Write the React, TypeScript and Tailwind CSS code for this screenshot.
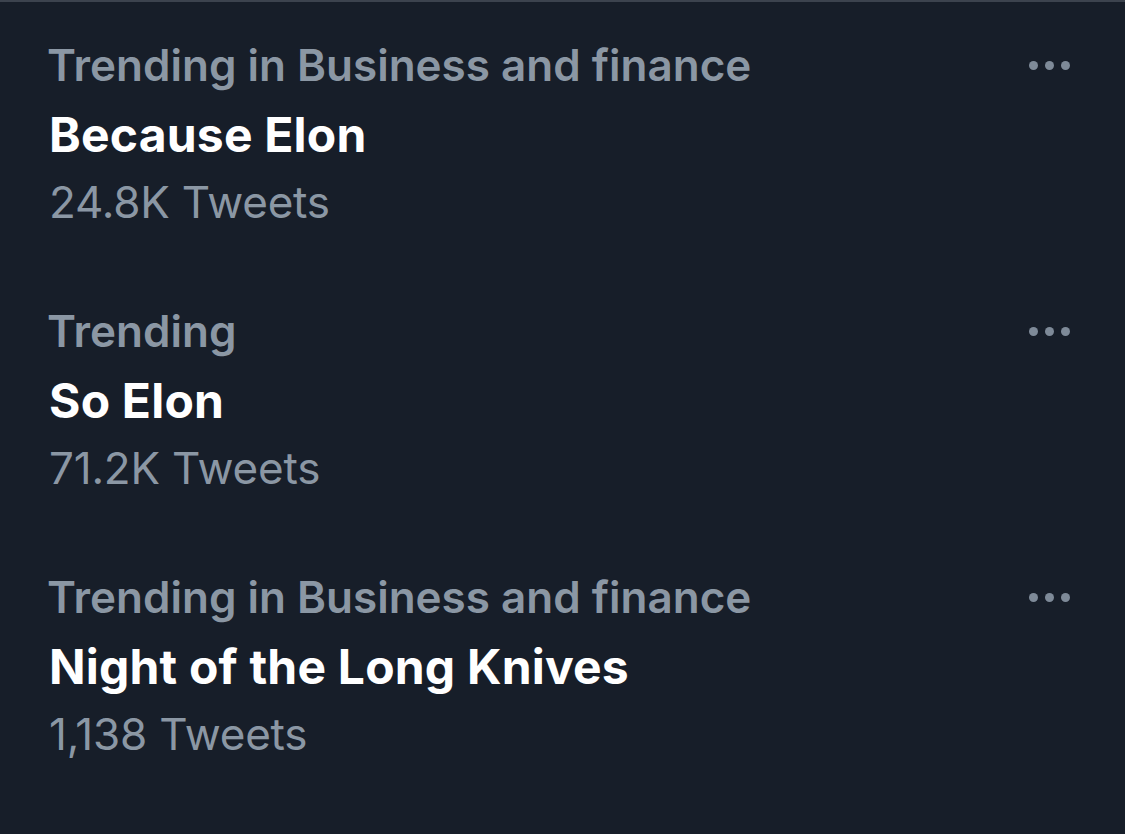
// Trend rows shown in the explore list
interface Trend {
  category: string
  title: string
  count: string
}

const trends: Trend[] = [
  { category: "Trending in Business and finance", title: "Because Elon", count: "24.8K Tweets" },
  { category: "Trending", title: "So Elon", count: "71.2K Tweets" },
  { category: "Trending in Business and finance", title: "Night of the Long Knives", count: "1,138 Tweets" },
]

function MoreDots() {
  return (
    <div className="flex items-center gap-[7px]">
      <span className="block w-[9px] h-[9px] rounded-full bg-[#7e8a98]" />
      <span className="block w-[9px] h-[9px] rounded-full bg-[#7e8a98]" />
      <span className="block w-[9px] h-[9px] rounded-full bg-[#7e8a98]" />
    </div>
  )
}

function TrendRow({ trend }: { trend: Trend }) {
  return (
    <div className="pt-[30px] pb-[32px] pl-[49px] pr-[55px]">
      <div className="flex items-center justify-between h-[70px]">
        <span className="-ml-[2px] text-[44px] leading-[70px] font-semibold text-[#8b97a4]">
          {trend.category}
        </span>
        <MoreDots />
      </div>
      <div className="text-[48px] leading-[70px] font-bold text-white tracking-[0.2px]">{trend.title}</div>
      <div className="text-[44px] leading-[64px] font-normal text-[#8b97a4] tracking-[-0.2px]">{trend.count}</div>
    </div>
  )
}

export default function App() {
  return (
    <div
      className="w-[1125px] h-[834px] overflow-hidden bg-[#171e29] border-t-2 border-[#3c434e]"
      style={{ fontFamily: "Inter, 'Noto Sans', sans-serif" }}
    >
      <div className="-mt-[2px]">
        {trends.map((t) => (
          <TrendRow key={t.title} trend={t} />
        ))}
      </div>
    </div>
  )
}
